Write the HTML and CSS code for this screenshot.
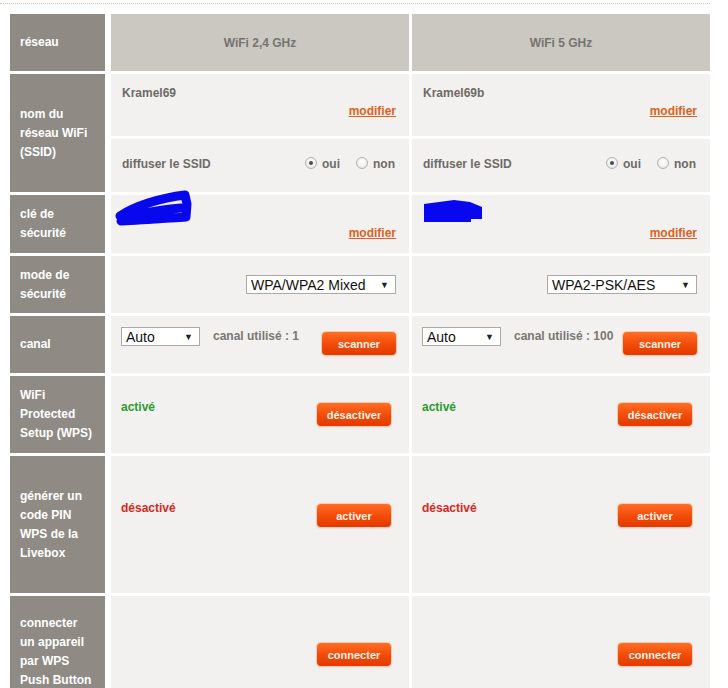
FILE: index.html
```html
<!DOCTYPE html>
<html lang="fr">
<head>
<meta charset="utf-8">
<title>Configuration WiFi</title>
<link rel="stylesheet" href="styles.css">
</head>
<body>
<div class="page">
  <div class="rule"></div>
  <div class="grid">
    <!-- en-tête -->
    <div class="label">réseau</div>
    <div class="head">WiFi 2,4 GHz</div>
    <div class="head">WiFi 5 GHz</div>

    <!-- SSID -->
    <div class="label">nom du réseau WiFi (SSID)</div>
    <div class="stack">
      <div class="cell ssid">
        <div class="name">Kramel69</div>
        <a class="link" href="#">modifier</a>
      </div>
      <div class="cell bcast">
        <span class="text">diffuser le SSID</span>
        <span class="radios">
          <span class="radio checked"></span><span class="rlabel">oui</span>
          <span class="radio"></span><span class="rlabel">non</span>
        </span>
      </div>
    </div>
    <div class="stack">
      <div class="cell ssid">
        <div class="name">Kramel69b</div>
        <a class="link" href="#">modifier</a>
      </div>
      <div class="cell bcast">
        <span class="text">diffuser le SSID</span>
        <span class="radios">
          <span class="radio checked"></span><span class="rlabel">oui</span>
          <span class="radio"></span><span class="rlabel">non</span>
        </span>
      </div>
    </div>

    <!-- clé -->
    <div class="label">clé de sécurité</div>
    <div class="cell key">
      <svg class="mark mark-a" width="82" height="40" viewBox="0 0 82 40">
        <path d="M5 26 C20 16 45 8 70 5 L72 14 L71 27 C55 28 30 30 6 31 C20 24 45 20 66 18" fill="none" stroke="#0808ee" stroke-width="9" stroke-linecap="round" stroke-linejoin="round"/>
      </svg>
      <a class="link" href="#">modifier</a>
    </div>
    <div class="cell key">
      <svg class="mark mark-b" width="72" height="30" viewBox="0 0 72 30">
        <polygon points="0,4 30,0 46,2 58,7 58,19 47,19 47,22 0,22" fill="#0808ee"/>
      </svg>
      <a class="link" href="#">modifier</a>
    </div>

    <!-- mode -->
    <div class="label">mode de sécurité</div>
    <div class="cell mode">
      <span class="select wide"><span class="val">WPA/WPA2 Mixed</span><span class="arrow">▼</span></span>
    </div>
    <div class="cell mode">
      <span class="select wide"><span class="val">WPA2-PSK/AES</span><span class="arrow">▼</span></span>
    </div>

    <!-- canal -->
    <div class="label">canal</div>
    <div class="cell canal">
      <span class="select narrow"><span class="val">Auto</span><span class="arrow">▼</span></span>
      <span class="text used">canal utilisé : 1</span>
      <button class="btn scan">scanner</button>
    </div>
    <div class="cell canal">
      <span class="select narrow"><span class="val">Auto</span><span class="arrow">▼</span></span>
      <span class="text used">canal utilisé : 100</span>
      <button class="btn scan">scanner</button>
    </div>

    <!-- WPS -->
    <div class="label">WiFi Protected Setup (WPS)</div>
    <div class="cell action wps">
      <span class="state on">activé</span>
      <button class="btn">désactiver</button>
    </div>
    <div class="cell action wps">
      <span class="state on">activé</span>
      <button class="btn">désactiver</button>
    </div>

    <!-- PIN -->
    <div class="label">générer un code PIN WPS de la Livebox</div>
    <div class="cell action pin">
      <span class="state off">désactivé</span>
      <button class="btn">activer</button>
    </div>
    <div class="cell action pin">
      <span class="state off">désactivé</span>
      <button class="btn">activer</button>
    </div>

    <!-- push button -->
    <div class="label">connecter un appareil par WPS Push Button</div>
    <div class="cell action push">
      <span class="state"></span>
      <button class="btn">connecter</button>
    </div>
    <div class="cell action push">
      <span class="state"></span>
      <button class="btn">connecter</button>
    </div>
  </div>
</div>
</body>
</html>
```

FILE: styles.css
```css
* { box-sizing: border-box; }

html, body {
  margin: 0;
  background: #fff;
}

body {
  font-family: "Liberation Sans", Arial, sans-serif;
  font-size: 12px;
  font-weight: bold;
  color: #6e6b67;
  overflow: hidden;
}

.page {
  padding-top: 3px;
}

.rule {
  width: 710px;
  border-top: 1px dotted #d6c4ba;
}

.grid {
  margin: 10px 0 0 10px;
  display: grid;
  grid-template-columns: 98px 298px 298px;
  grid-template-rows: 57px 118px 58px 57px 57px 77px 137px 112px;
  column-gap: 3px;
  row-gap: 3px;
}

.label {
  margin-right: 3px;
  background: #8f8b84;
  color: #fff;
  padding: 0 10px;
  line-height: 19px;
  display: flex;
  align-items: center;
}

.head {
  background: #cbc8c2;
  color: #77736e;
  display: flex;
  align-items: center;
  justify-content: center;
}

.stack {
  display: flex;
  flex-direction: column;
  gap: 3px;
}

.cell {
  background: #f2f1ef;
  position: relative;
}

.stack .cell { flex: 1; }

.link {
  color: #e0601e;
  text-decoration: underline;
  line-height: 18px;
}

/* nom du réseau */
.ssid {
  padding: 10px 13px 0 11px;
  display: flex;
  flex-direction: column;
}
.ssid .name { line-height: 18px; }
.ssid .link { align-self: flex-end; }

/* diffusion */
.bcast {
  display: flex;
  align-items: center;
  justify-content: space-between;
  padding: 0 14px 2px 11px;
}
.radios {
  display: flex;
  align-items: center;
}
.radio {
  width: 12px;
  height: 12px;
  border-radius: 50%;
  border: 1px solid #b2b2b2;
  background: radial-gradient(circle at 50% 40%, #fff 0%, #f4f4f4 45%, #dcdcdc 100%);
  margin-right: 5px;
  margin-bottom: 2px;
  position: relative;
}
.radio.checked::after {
  content: "";
  position: absolute;
  left: 3px;
  top: 3px;
  width: 4px;
  height: 4px;
  border-radius: 50%;
  background: #4a4a4a;
}
.rlabel + .radio { margin-left: 16px; }

/* clé */
.key {
  display: flex;
  align-items: flex-end;
  justify-content: flex-end;
  padding: 0 13px 11px 0;
}
.mark { position: absolute; }
.mark-a { left: 4px; top: -5px; }
.mark-b { left: 12px; top: 5px; }

/* sélecteurs */
.select {
  display: inline-flex;
  align-items: center;
  justify-content: space-between;
  height: 19px;
  border: 1px solid #a9a9a9;
  background: #fff;
  color: #111;
  font-weight: normal;
  font-size: 14px;
  padding: 0 6px 0 4px;
}
.select.wide { width: 150px; }
.select.narrow { width: 79px; }
.select .arrow {
  font-size: 9px;
  color: #222;
}

.mode {
  display: flex;
  align-items: center;
  justify-content: flex-end;
  padding-right: 13px;
}

/* canal */
.canal {
  display: flex;
  align-items: flex-start;
  padding: 11px 13px 0 10px;
}
.canal .used {
  margin-left: 13px;
  line-height: 18px;
  color: #7a7772;
}
.canal .btn { margin-left: auto; margin-top: 5px; }

/* lignes à bouton */
.action {
  display: flex;
  align-items: flex-start;
  justify-content: space-between;
  padding: 22px 18px 0 10px;
}
.action .btn { margin-top: 5px; }
.pin { padding-top: 43px; }
.push { padding-top: 42px; }

.state { line-height: 18px; }
.state.on { color: #2f9a31; }
.state.off { color: #d42a24; }

.btn {
  width: 74px;
  height: 23px;
  border: none;
  border-radius: 4px;
  background: linear-gradient(#ff6e24, #f24a08 55%, #e23a00);
  box-shadow: 0 0 0 1px #f7cdb4, 0 1px 2px rgba(160, 80, 40, 0.35);
  color: #fff4ec;
  font-family: "Liberation Sans", Arial, sans-serif;
  font-size: 11px;
  font-weight: bold;
  padding: 0;
  cursor: pointer;
}
```
